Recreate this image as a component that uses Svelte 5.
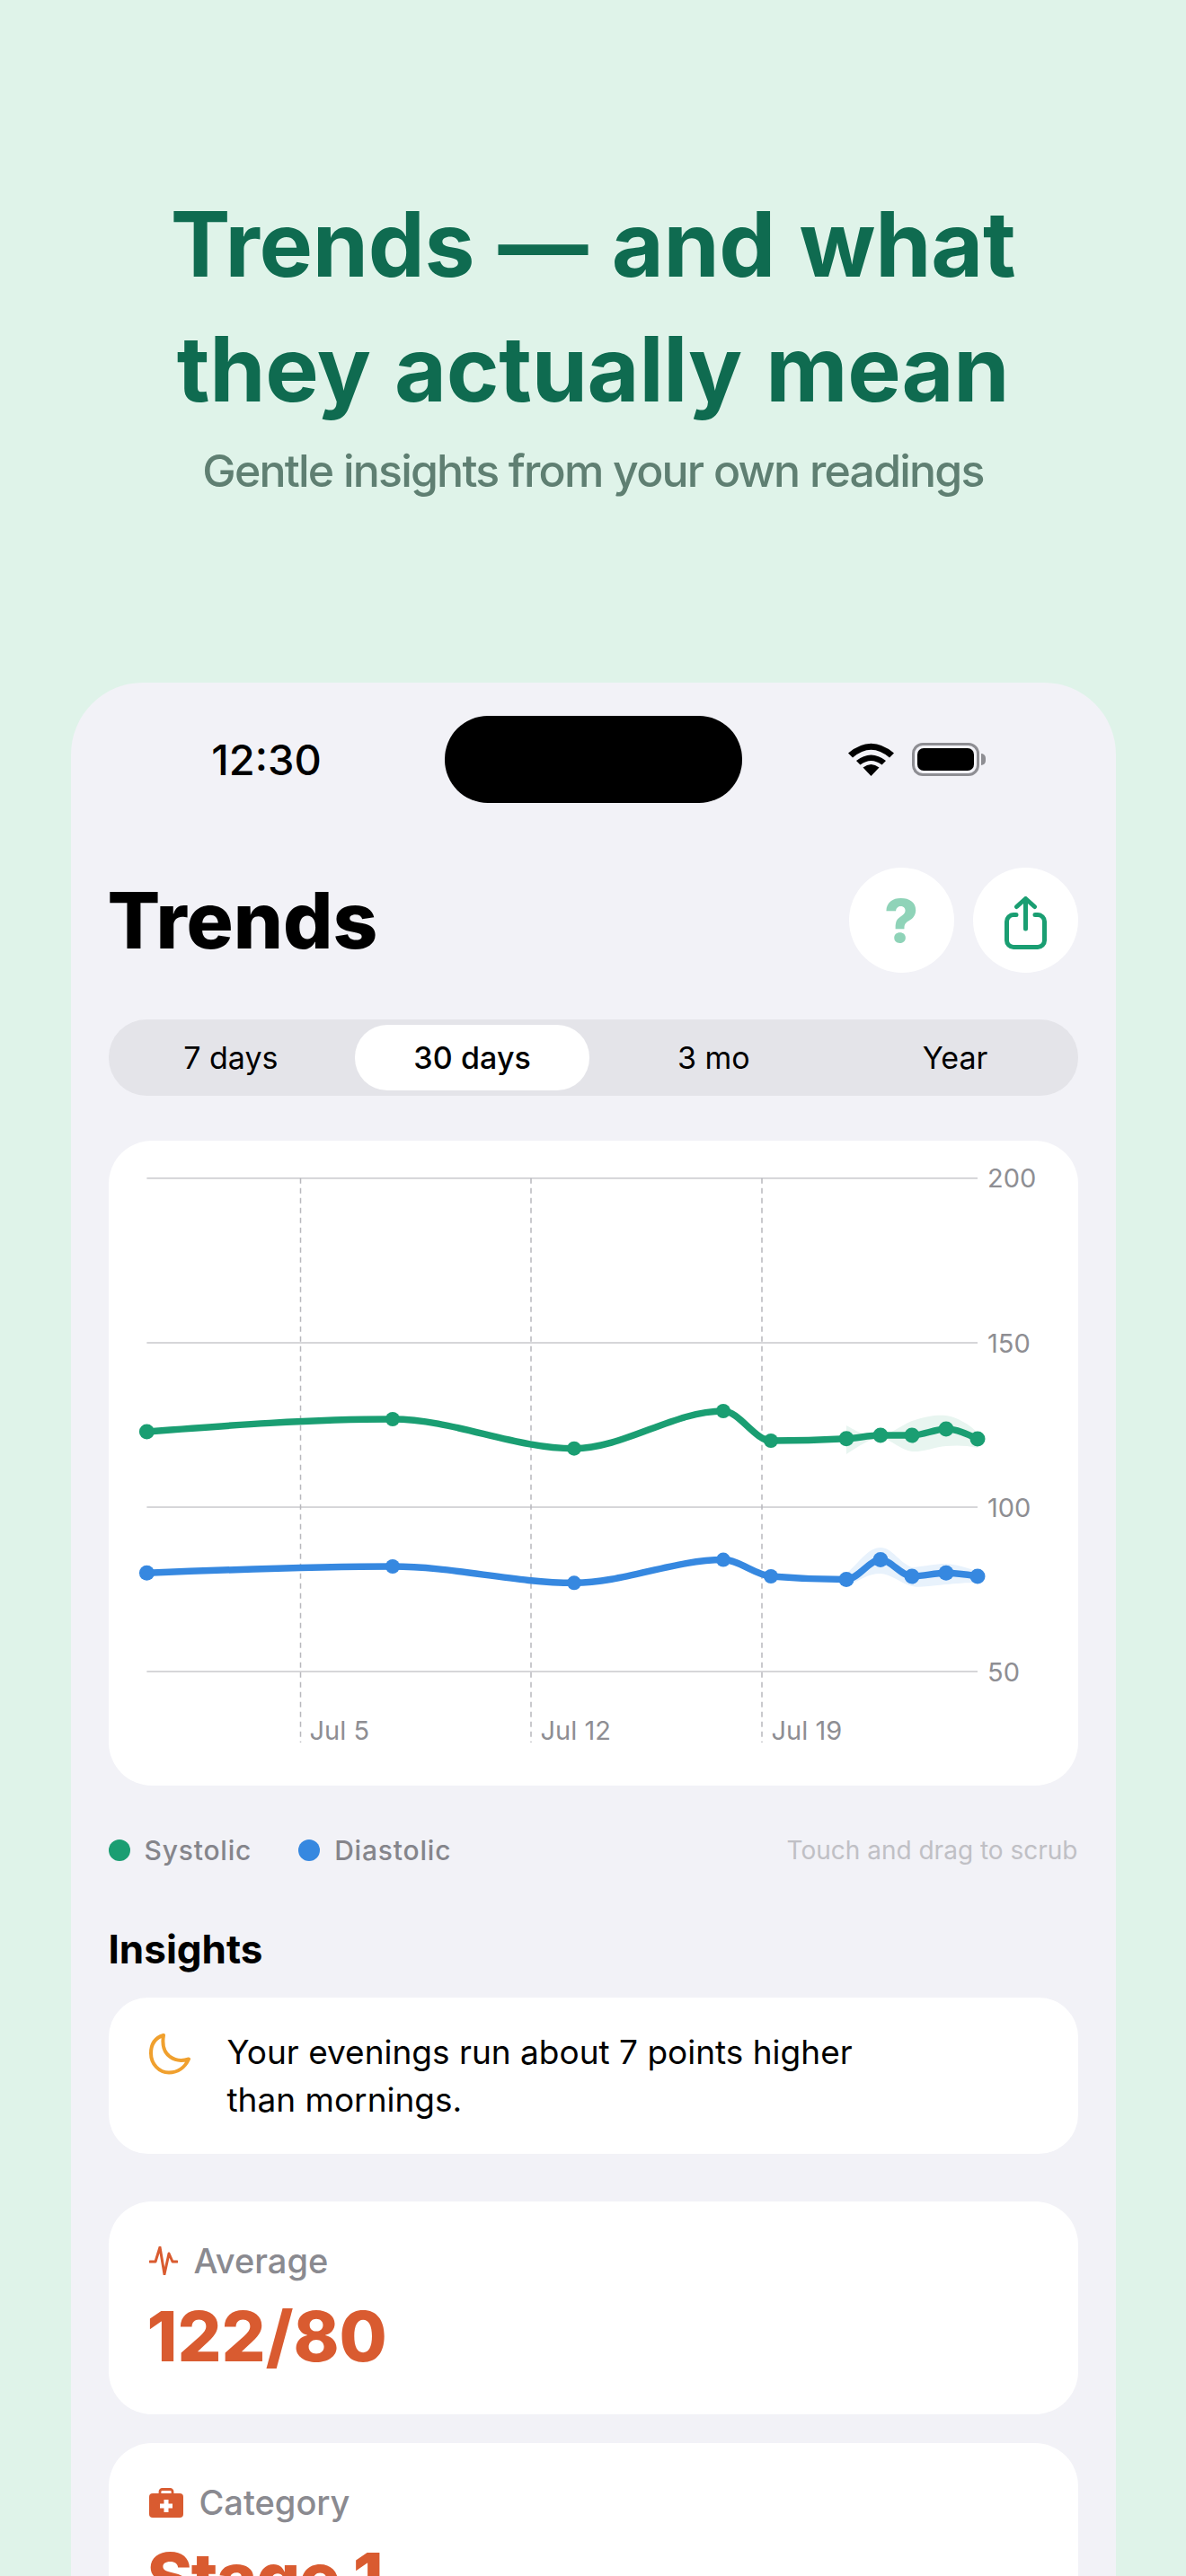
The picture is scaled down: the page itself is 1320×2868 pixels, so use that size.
<script>
  const xs = [162.4, 436, 638, 804, 857, 941, 979, 1014, 1052, 1087];
  const sys = [1594, 1580, 1612.7, 1571, 1604, 1601.7, 1598, 1598, 1591, 1602];
  const dia = [1751.3, 1744, 1762.3, 1736.6, 1755, 1758.6, 1736.6, 1755, 1751.3, 1755];
  const grid = [
    { y: 1311.7, label: '200' },
    { y: 1495, label: '150' },
    { y: 1678, label: '100' },
    { y: 1861, label: '50' }
  ];
  const days = [
    { x: 333.5, tx: 343.5, label: 'Jul 5' },
    { x: 590, tx: 600.5, label: 'Jul 12' },
    { x: 847, tx: 857.5, label: 'Jul 19' }
  ];
  const segments = ['7 days', '30 days', '3 mo', 'Year'];

  const sign = (v) => (v < 0 ? -1 : 1);

  // Monotone cubic interpolation through the readings
  function curve(px, py) {
    const n = px.length;
    const h = [];
    const s = [];
    for (let i = 0; i < n - 1; i++) {
      h[i] = px[i + 1] - px[i];
      s[i] = (py[i + 1] - py[i]) / h[i];
    }
    const t = new Array(n);
    for (let i = 1; i < n - 1; i++) {
      const p = (s[i - 1] * h[i] + s[i] * h[i - 1]) / (h[i - 1] + h[i]);
      t[i] = (sign(s[i - 1]) + sign(s[i])) * Math.min(Math.abs(s[i - 1]), Math.abs(s[i]), 0.5 * Math.abs(p)) || 0;
    }
    t[0] = (3 * s[0] - t[1]) / 2;
    t[n - 1] = (3 * s[n - 2] - t[n - 2]) / 2;
    let d = `M${px[0]} ${py[0]}`;
    for (let i = 0; i < n - 1; i++) {
      const dx = h[i] / 3;
      d += `C${px[i] + dx} ${py[i] + t[i] * dx} ${px[i + 1] - dx} ${py[i + 1] - t[i + 1] * dx} ${px[i + 1]} ${py[i + 1]}`;
    }
    return d;
  }

  const sysPath = curve(xs, sys);
  const diaPath = curve(xs, dia);
</script>

<div class="page">
  <header class="hero">
    <h1>Trends — and what<br />they actually mean</h1>
    <p>Gentle insights from your own readings</p>
  </header>

  <main class="phone">
    <div class="status">
      <span class="time">12:30</span>
      <div class="island"></div>
      <div class="sys-icons">
        <svg class="wifi" width="51" height="37" viewBox="0 0 51 37" aria-hidden="true">
          <path d="M25.5 37 16.5 27.5Q25.5 20.5 34.5 27.5Z" />
          <path d="M9 20Q25.5 7 42 20L37.5 24.6Q25.5 15.5 13.5 24.6Z" />
          <path d="M0 11.5Q25.5 -10 51 11.5L46 16.6Q25.5 -1 5 16.6Z" />
        </svg>
        <div class="battery"><i></i></div>
        <div class="tip"></div>
      </div>
    </div>

    <div class="title-row">
      <h2>Trends</h2>
      <div class="actions">
        <button class="round help">?</button>
        <button class="round" aria-label="Share">
          <svg class="share" width="47" height="59" viewBox="0 0 47 59" fill="none" stroke="#1a9e72" stroke-width="5" stroke-linecap="round" stroke-linejoin="round" aria-hidden="true">
            <path d="M13 20.5H10A7.5 7.5 0 0 0 2.5 28V49A7.5 7.5 0 0 0 10 56.5H37A7.5 7.5 0 0 0 44.5 49V28A7.5 7.5 0 0 0 37 20.5H34" />
            <path d="M23.5 36V3M13.5 11.5 23.5 2.5 33.5 11.5" />
          </svg>
        </button>
      </div>
    </div>

    <div class="segments">
      {#each segments as seg, i}
        <div class="seg" class:active={i === 1}>{seg}</div>
      {/each}
    </div>

    <section class="chart">
      <svg viewBox="120 1270 1079 718" width="1079" height="718">
        {#each grid as g}
          <line class="grid" x1="162.4" x2="1087" y1={g.y} y2={g.y} />
          <text class="axis" x="1098" y={g.y + 10.5}>{g.label}</text>
        {/each}
        {#each days as d}
          <line class="day" x1={d.x} x2={d.x} y1="1311.7" y2="1940" />
          <text class="axis" x={d.tx} y="1937">{d.label}</text>
        {/each}

        <path class="band-g" d="M941 1587C950 1592 955 1595 962 1597C970 1599 975 1598 979 1598C990 1597 1000 1588 1014 1582C1030 1577 1040 1575 1052 1576C1065 1578 1078 1586 1087 1595V1612C1075 1609 1062 1609 1052 1610C1040 1611 1025 1617 1014 1616C1002 1615 990 1602 979 1600C970 1600 955 1610 941 1619Z" />
        <path class="band-b" d="M941 1752C955 1740 965 1723 979 1723C992 1723 1000 1740 1014 1745C1028 1744 1040 1741 1052 1741C1065 1742 1078 1746 1087 1750V1762C1075 1762 1062 1763 1052 1764C1040 1765 1025 1768 1014 1766C1000 1762 990 1752 979 1752C965 1752 955 1760 941 1766Z" />

        <path class="line-g" d={sysPath} />
        <path class="line-b" d={diaPath} />
        {#each xs as x, i}
          <circle class="dot-g" cx={x} cy={sys[i]} r={i === 0 || i > 4 ? 8.5 : 8} />
          <circle class="dot-b" cx={x} cy={dia[i]} r={i === 0 || i > 4 ? 8.5 : 8} />
        {/each}
      </svg>
    </section>

    <div class="legend">
      <span class="key"><i class="swatch green"></i>Systolic</span>
      <span class="key"><i class="swatch blue"></i>Diastolic</span>
      <span class="hint">Touch and drag to scrub</span>
    </div>

    <h3>Insights</h3>
    <div class="insight">
      <svg class="moon" width="46" height="46" viewBox="0 0 46 46" fill="none" stroke="#f0a02e" stroke-width="4" stroke-linejoin="round" aria-hidden="true">
        <path d="M16 2C6 5 2 13 2 22C2 34 11 43.500 22 43.500C32 43.500 40 37.500 44 28.500C30 33 12 26 16 2Z" />
      </svg>
      <p>Your evenings run about 7 points higher<br />than mornings.</p>
    </div>

    <section class="stat">
      <div class="stat-label">
        <svg class="pulse" width="32" height="32" viewBox="0 0 32 32" fill="none" stroke="#d95b30" stroke-width="3" stroke-linecap="round" stroke-linejoin="round" aria-hidden="true">
          <path d="M1 17H7L12 1 17 31 22 8 26 17H31" />
        </svg>
        Average
      </div>
      <div class="stat-value">122/80</div>
    </section>

    <section class="stat second">
      <div class="stat-label">
        <svg class="kit" width="38" height="33" viewBox="0 0 38 33" aria-hidden="true">
          <path d="M12 7V4A2.500 2.500 0 0 1 14.500 1.500H23.500A2.500 2.500 0 0 1 26 4V7" fill="none" stroke="#d95b30" stroke-width="2.800" />
          <rect y="6" width="38" height="27" rx="4" fill="#d95b30" />
          <path d="M16.500 13H21.500V17.500H26V22.500H21.500V27H16.500V22.500H12V17.500H16.500Z" fill="#fff" />
        </svg>
        Category
      </div>
      <div class="stat-value stage">Stage 1</div>
    </section>
  </main>
</div>

<style>
  :global(body) {
    margin: 0;
    font-family: Inter, "Liberation Sans", sans-serif;
  }

  .page {
    height: 2868px;
    overflow: hidden;
    background: #dff3e9;
    display: flex;
    flex-direction: column;
    box-sizing: border-box;
    padding-top: 202px;
  }

  .hero {
    text-align: center;
    height: 558px;
    flex-shrink: 0;
  }

  h1 {
    margin: 0;
    font-size: 100px;
    line-height: 139px;
    font-weight: 700;
    letter-spacing: -0.3px;
    word-spacing: 3px;
    color: #0f6b50;
  }

  .hero p {
    margin: 9px 0 0;
    font-size: 50px;
    line-height: 70px;
    font-weight: 500;
    color: #5f7f72;
    letter-spacing: -1.8px;
  }

  .phone {
    margin: 0 78.5px;
    padding: 37px 42px 0;
    flex-shrink: 0;
    background: #f2f2f7;
    border-radius: 80px 80px 0 0;
  }

  .status {
    display: grid;
    grid-template-columns: 1fr 331px 1fr;
    align-items: center;
    height: 97px;
  }

  .time {
    text-align: center;
    padding-right: 22px;
    font-size: 47px;
    font-weight: 550;
    color: #000;
  }

  .island {
    height: 97px;
    border-radius: 48px;
    background: #000;
  }

  .sys-icons {
    display: flex;
    align-items: center;
    padding-left: 118px;
  }

  .wifi {
    fill: #000;
    margin-right: 20px;
  }

  .battery {
    width: 75px;
    height: 37px;
    box-sizing: border-box;
    border: 3px solid #8e8e93;
    border-radius: 12px;
    padding: 3px;
  }

  .battery i {
    display: block;
    height: 100%;
    background: #000;
    border-radius: 7px;
  }

  .tip {
    width: 5px;
    height: 13px;
    margin-left: 2px;
    background: #8e8e93;
    border-radius: 0 5px 5px 0;
  }

  .title-row {
    margin-top: 72px;
    display: flex;
    justify-content: space-between;
    align-items: center;
  }

  h2 {
    margin: 0 0 0 -1px;
    font-size: 87px;
    font-weight: 800;
    color: #000;
  }

  .actions {
    display: flex;
    gap: 21px;
  }

  .round {
    width: 117px;
    height: 117px;
    border: 0;
    padding: 0;
    border-radius: 50%;
    background: #fff;
    display: flex;
    align-items: center;
    justify-content: center;
    font-family: inherit;
  }

  .help {
    font-size: 66px;
    font-weight: 800;
    color: #8fd3b8;
  }

  .share {
    margin-top: 5px;
  }

  .segments {
    margin-top: 52px;
    height: 85px;
    box-sizing: border-box;
    padding: 6px;
    display: grid;
    grid-template-columns: repeat(4, 1fr);
    gap: 8px;
    background: #e4e4e9;
    border-radius: 42px;
  }

  .seg {
    display: flex;
    align-items: center;
    justify-content: center;
    border-radius: 36px;
    font-size: 34px;
    font-weight: 400;
    color: #000;
  }

  .seg.active {
    background: #fff;
    font-weight: 500;
    letter-spacing: 0.1px;
  }

  .chart {
    margin-top: 50px;
    height: 718px;
    background: #fff;
    border-radius: 48px;
    overflow: hidden;
  }

  .chart svg {
    display: block;
  }

  .grid {
    stroke: #c8c8cc;
    stroke-width: 1.6;
  }

  .day {
    stroke: #b8b8bd;
    stroke-width: 1.5;
    stroke-dasharray: 6 5;
  }

  .axis {
    font-size: 29px;
    fill: #8e8e93;
  }

  .band-g {
    fill: #e8f5f0;
  }

  .band-b {
    fill: #e8f2fc;
  }

  .line-g,
  .line-b {
    fill: none;
    stroke-width: 7.5;
    stroke-linecap: round;
    stroke-linejoin: round;
  }

  .line-g {
    stroke: #1a9e72;
  }

  .line-b {
    stroke: #3688e0;
  }

  .dot-g {
    fill: #1a9e72;
  }

  .dot-b {
    fill: #3688e0;
  }

  .legend {
    margin-top: 54px;
    height: 36px;
    display: flex;
    align-items: center;
    font-size: 30px;
    font-weight: 500;
    letter-spacing: 0.8px;
    color: #85858b;
  }

  .key {
    display: flex;
    align-items: center;
    gap: 16px;
    margin-right: 52px;
  }

  .swatch {
    width: 24px;
    height: 24px;
    border-radius: 50%;
  }

  .green {
    background: #1a9e72;
  }

  .blue {
    background: #3688e0;
  }

  .hint {
    margin-left: auto;
    font-size: 28px;
    font-weight: 400;
    letter-spacing: 0;
    color: #c0c0c5;
  }

  h3 {
    margin: 63px 0 0;
    font-size: 44px;
    line-height: 58px;
    font-weight: 700;
    color: #000;
  }

  .insight {
    margin-top: 25px;
    height: 174px;
    box-sizing: border-box;
    padding: 34px 45px 0;
    display: flex;
    align-items: flex-start;
    gap: 41px;
    background: #fff;
    border-radius: 44px;
  }

  .moon {
    margin-top: 6px;
  }

  .insight p {
    margin: 0;
    font-size: 37px;
    line-height: 53px;
    color: #000;
  }

  .stat {
    margin-top: 53px;
    height: 237px;
    box-sizing: border-box;
    padding: 42px 45px 0;
    background: #fff;
    border-radius: 48px;
  }

  .stat.second {
    margin-top: 32px;
  }

  .stat-label {
    display: flex;
    align-items: center;
    gap: 18px;
    font-size: 38px;
    line-height: 48px;
    font-weight: 500;
    color: #8a8a90;
  }

  .stat-value {
    margin-top: 15px;
    margin-left: -2px;
    font-size: 77px;
    line-height: 90px;
    font-weight: 800;
    color: #d95b30;
  }

  .stage {
    letter-spacing: -1.5px;
  }
</style>
